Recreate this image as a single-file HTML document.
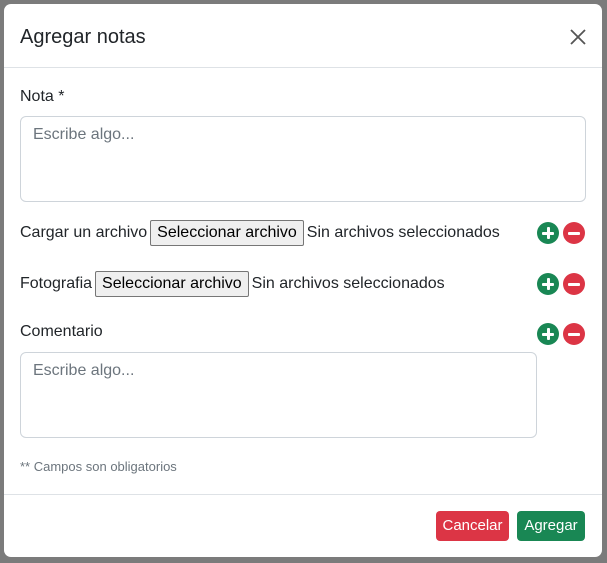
<!DOCTYPE html><html><head><style>
body{margin:0;width:607px;height:563px;background:#7b7b7b;font-family:"Liberation Sans","DejaVu Sans",sans-serif;color:#212529;position:relative;overflow:hidden}
.m{position:absolute;left:4px;top:4px;width:598px;height:553px;background:#fff;border-radius:7px}
.a{position:absolute;white-space:nowrap}
.ta{position:absolute;border:1px solid #ced4da;border-radius:6px;box-sizing:border-box;color:#6c757d;font-size:16px;padding:9px 12px}
.btnf{display:inline-block;background:#efefef;border:1px solid #767676;border-radius:2px;padding:2px 6px;line-height:20px;font-size:16px;color:#000;margin:0 3px;vertical-align:top}
.c{position:absolute;width:22px;height:22px;border-radius:50%}
.c:before{content:"";position:absolute;left:5px;top:9.5px;width:12px;height:3px;background:#fff;border-radius:1px}
.g{background:#198754}.g:after{content:"";position:absolute;left:9.5px;top:5px;width:3px;height:12px;background:#fff;border-radius:1px}
.r{background:#dc3545}
.b{position:absolute;color:#fff;font-size:15px;border-radius:4px;text-align:center;line-height:30px;height:30px}
</style></head><body>
<div class="m">
<div class="a" style="left:16px;top:22px;font-size:20px;font-weight:500">Agregar notas</div>
<svg class="a" style="left:565px;top:24px" width="18" height="18"><path d="M2 2L16 16M16 2L2 16" stroke="#555" stroke-width="1.8"/></svg>
<div class="a" style="left:0;top:63px;width:598px;border-top:1px solid #dee2e6"></div>
<div class="a" style="left:16px;top:84px;font-size:16px">Nota *</div>
<div class="ta" style="left:16px;top:112px;width:566px;height:86px">Escribe algo...</div>
<div class="a" style="left:16px;top:216px;font-size:16px;line-height:26px">Cargar un archivo<span class="btnf">Seleccionar archivo</span>Sin archivos seleccionados</div>
<div class="c g" style="left:533px;top:218px"></div><div class="c r" style="left:559px;top:218px"></div>
<div class="a" style="left:16px;top:267px;font-size:16px;line-height:26px">Fotografia<span class="btnf">Seleccionar archivo</span>Sin archivos seleccionados</div>
<div class="c g" style="left:533px;top:269px"></div><div class="c r" style="left:559px;top:269px"></div>
<div class="a" style="left:16px;top:319px;font-size:16px">Comentario</div>
<div class="c g" style="left:533px;top:319px"></div><div class="c r" style="left:559px;top:319px"></div>
<div class="ta" style="left:16px;top:348px;width:517px;height:86px">Escribe algo...</div>
<div class="a" style="left:16px;top:455px;font-size:13px;color:#6c757d">** Campos son obligatorios</div>
<div class="a" style="left:0;top:490px;width:598px;border-top:1px solid #dee2e6"></div>
<div class="b" style="left:432px;top:507px;width:73px;background:#dc3545">Cancelar</div>
<div class="b" style="left:513px;top:507px;width:68px;background:#198754">Agregar</div>
</div>
</body></html>
